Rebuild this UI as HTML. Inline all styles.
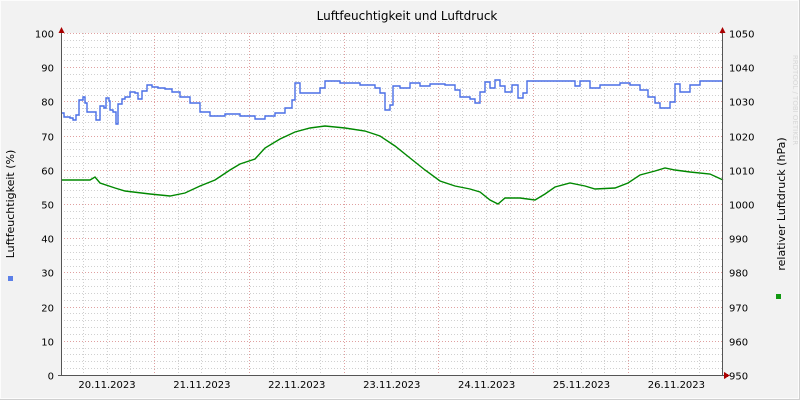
<!DOCTYPE html>
<html><head><meta charset="utf-8"><style>
html,body{margin:0;padding:0;background:#f2f2f2}
svg{display:block}
text{font-family:"DejaVu Sans","Liberation Sans",sans-serif;font-size:10px;fill:#000}
</style></head><body>
<svg id="g" width="800" height="400" xmlns="http://www.w3.org/2000/svg" shape-rendering="crispEdges">
<rect x="0" y="0" width="800" height="400" fill="#f2f2f2"/>
<rect x="0.5" y="0.5" width="798" height="398" fill="none" stroke="#fcfcfc"/>
<line x1="799.5" y1="0" x2="799.5" y2="400" stroke="#cfcfcf"/>
<line x1="0" y1="399.5" x2="800" y2="399.5" stroke="#cfcfcf"/>
<rect x="61" y="33" width="662" height="342" fill="#fff"/>
<g id="grid"></g>
<text x="407" y="20" text-anchor="middle" style="font-size:12px">Luftfeuchtigkeit und Luftdruck</text>
<text transform="translate(14,204) rotate(-90)" text-anchor="middle" style="font-size:11px">Luftfeuchtigkeit (%)</text>
<text transform="translate(785,204) rotate(-90)" text-anchor="middle" style="font-size:11px">relativer Luftdruck (hPa)</text>
<text transform="translate(793,100) rotate(90)" text-anchor="middle" style="font-size:7px;fill:#d8d8d8">RRDTOOL / TOBI OETIKER</text>
<rect x="8" y="276" width="5" height="5" fill="#5b7fe8"/>
<rect x="776" y="294" width="5" height="5" fill="#119911"/>
<polyline fill="none" stroke="#008800" stroke-width="1.4" shape-rendering="auto" points="61,180 90,180 95,177 100,183 115,188 125,191 150,194 170,196 185,193 200,186 215,180 230,170 240,164 255,159 265,148 280,139 295,132 310,128 325,126 345,128 365,131 380,136 395,146 410,158 425,170 440,181 455,186 470,189 480,192 490,200 498,204 505,198 520,198 535,200 545,194 555,187 570,183 585,186 595,189 615,188 628,183 640,175 655,171 665,168 675,170 690,172 710,174 723,180"/>
<polyline id="blue" fill="none" stroke="#4a6fe6" stroke-width="1.4" shape-rendering="auto" points=""/>
<line x1="61.5" y1="28" x2="61.5" y2="376" stroke="#555"/>
<line x1="722.5" y1="28" x2="722.5" y2="376" stroke="#555"/>
<line x1="58" y1="375.5" x2="728" y2="375.5" stroke="#555"/>
<polygon points="58.5,33 64.5,33 61.5,27" fill="#a00"/>
<polygon points="719.5,33 725.5,33 722.5,27" fill="#a00"/>
<polygon points="724,372 724,379 730,375.5" fill="#a00"/>
<g id="lbl"></g>
</svg>
<script>
var ns="http://www.w3.org/2000/svg",g=document.getElementById('grid'),l=document.getElementById('lbl');
function ln(x1,y1,x2,y2,c){var e=document.createElementNS(ns,'line');e.setAttribute('x1',x1);e.setAttribute('y1',y1);e.setAttribute('x2',x2);e.setAttribute('y2',y2);e.setAttribute('stroke',c);e.setAttribute('stroke-dasharray','1,2');g.appendChild(e);}
function tx(x,y,s,a){var e=document.createElementNS(ns,'text');e.setAttribute('x',x);e.setAttribute('y',y);e.setAttribute('text-anchor',a);e.textContent=s;l.appendChild(e);}
for(var i=0;i<=50;i++){var y=Math.round(375-i*6.84)+0.5;if(i%5==0){ln(61,y,723,y,'#e0a0a0');var v=i*2;tx(54,y+4,v,'end');tx(729,y+4,950+v,'start');}else ln(61,y,723,y,'#d0d0d0');}
for(var k=-4;k<=24;k++){var x=Math.round(154+k*23.7)+0.5;if(x<62||x>722)continue;ln(x,33,x,375,k%4==0?'#e0a0a0':'#d0d0d0');}
var d=['20','21','22','23','24','25','26'];for(var j=0;j<7;j++)tx(107+j*94.9,388,d[j]+'.11.2023','middle');
var p=[[61,113],[64,117],[70,118],[73,120],[76,115],[79,100],[83,97],[85,103],[87,112],[95,112],[96,120],[100,106],[104,108],[106,98],[109,101],[110,110],[113,112],[116,124],[118,104],[122,99],[125,97],[130,92],[135,93],[138,99],[142,91],[147,85],[152,87],[158,88],[165,89],[172,92],[180,97],[190,103],[200,112],[210,116],[225,114],[240,116],[255,119],[265,116],[275,113],[285,108],[292,100],[295,83],[300,93],[310,93],[320,88],[325,81],[340,83],[360,85],[375,88],[380,93],[385,110],[390,105],[393,86],[400,88],[410,83],[420,86],[430,84],[445,85],[455,90],[460,97],[470,99],[475,103],[480,92],[485,82],[490,88],[495,80],[500,86],[505,92],[512,85],[518,98],[523,93],[527,81],[540,81],[570,81],[575,86],[580,81],[590,88],[600,85],[620,83],[630,85],[640,90],[648,97],[655,103],[660,108],[670,102],[675,84],[680,92],[690,85],[700,81],[723,81]];
var s='';for(var i=0;i<p.length;i++){if(i>0)s+=p[i][0]+','+p[i-1][1]+' ';s+=p[i][0]+','+p[i][1]+' ';}
document.getElementById('blue').setAttribute('points',s);
</script>
</body></html>
